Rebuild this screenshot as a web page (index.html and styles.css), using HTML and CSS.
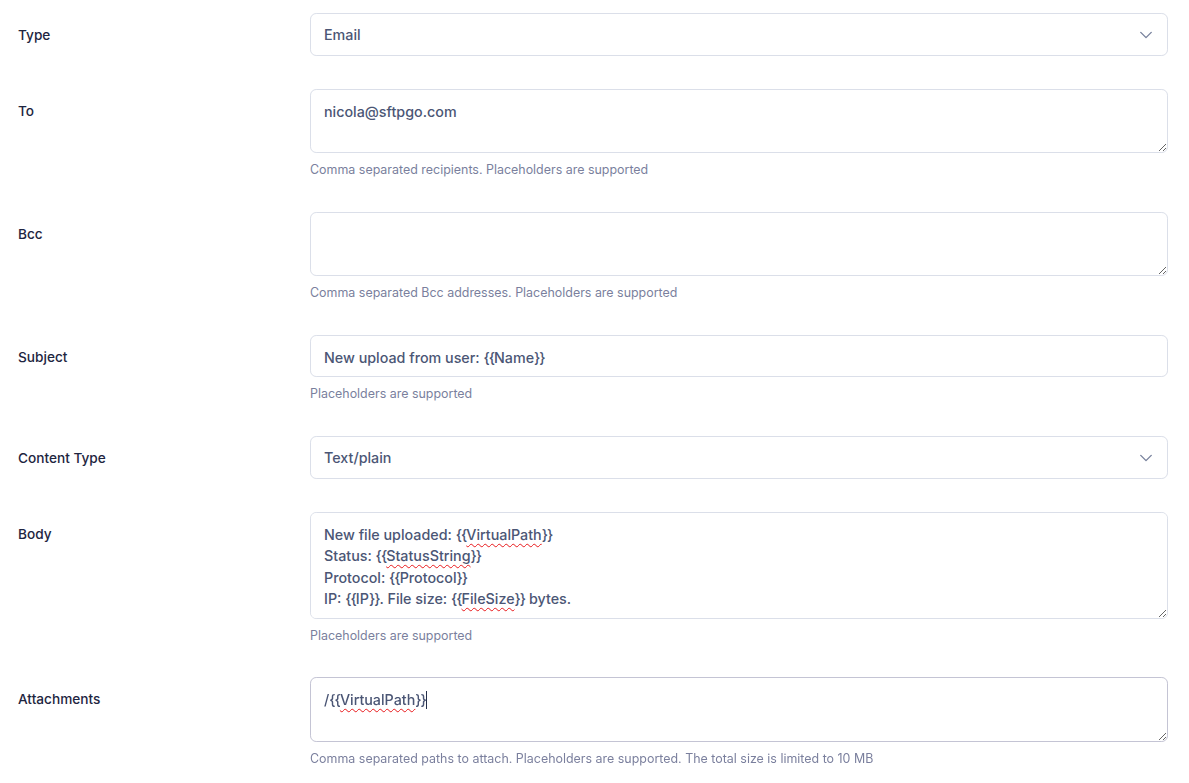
FILE: index.html
```html
<!DOCTYPE html>
<html lang="en">
<head>
<meta charset="utf-8">
<title>Email action</title>
<link rel="stylesheet" href="styles.css">
</head>
<body>
<form class="form">
  <div class="row">
    <label class="label">Type</label>
    <div class="field">
      <div class="control select">
        <span>Email</span>
        <svg class="chev" width="14" height="14" viewBox="0 0 16 16"><path d="M2 5l6 6 6-6" fill="none" stroke="#78829D" stroke-width="1.6" stroke-linecap="round" stroke-linejoin="round"/></svg>
      </div>
    </div>
  </div>
  <div class="row">
    <label class="label">To</label>
    <div class="field">
      <div class="control area rows2">nicola@sftpgo.com</div>
      <div class="hint">Comma separated recipients. Placeholders are supported</div>
    </div>
  </div>
  <div class="row">
    <label class="label">Bcc</label>
    <div class="field">
      <div class="control area rows2"></div>
      <div class="hint">Comma separated Bcc addresses. Placeholders are supported</div>
    </div>
  </div>
  <div class="row">
    <label class="label">Subject</label>
    <div class="field">
      <div class="control input">New upload from user: <span class="br">{{</span>Name<span class="br">}}</span></div>
      <div class="hint">Placeholders are supported</div>
    </div>
  </div>
  <div class="row">
    <label class="label">Content Type</label>
    <div class="field">
      <div class="control select">
        <span>Text/plain</span>
        <svg class="chev" width="14" height="14" viewBox="0 0 16 16"><path d="M2 5l6 6 6-6" fill="none" stroke="#78829D" stroke-width="1.6" stroke-linecap="round" stroke-linejoin="round"/></svg>
      </div>
    </div>
  </div>
  <div class="row">
    <label class="label">Body</label>
    <div class="field">
      <div class="control area rows4">New file uploaded: <span class="br">{{</span><span class="sp">VirtualPath</span><span class="br">}}</span><br>Status: <span class="br">{{</span><span class="sp">StatusString</span><span class="br">}}</span><br>Protocol: <span class="br">{{</span>Protocol<span class="br">}}</span><br>IP: <span class="br">{{</span>IP<span class="br">}}</span>. File size: <span class="br">{{</span><span class="sp">FileSize</span><span class="br">}}</span> bytes.</div>
      <div class="hint">Placeholders are supported</div>
    </div>
  </div>
  <div class="row">
    <label class="label">Attachments</label>
    <div class="field">
      <div class="control area rows2 focus">/<span class="br">{{</span><span class="sp">VirtualPath</span><span class="br">}}</span><span class="caret"></span></div>
      <div class="hint">Comma separated paths to attach. Placeholders are supported. The total size is limited to 10 MB</div>
    </div>
  </div>
</form>
</body>
</html>
```
FILE: styles.css
```css
html, body {
  margin: 0;
  padding: 0;
  background: #ffffff;
}
body {
  font-family: Inter, "Noto Sans", sans-serif;
  -webkit-font-smoothing: antialiased;
}
.form {
  padding: 13px 21px 0 18px;
  display: flex;
  flex-direction: column;
  gap: 32.6px;
}
.row {
  display: grid;
  grid-template-columns: 292px 1fr;
  align-items: start;
}
.label {
  font-size: 13.65px;
  font-weight: 500;
  color: #1E2540;
  line-height: 21px;
  padding-top: 12px;
}
.control {
  box-sizing: border-box;
  border: 1px solid #DBDFE9;
  border-radius: 6.2px;
  padding: 11px 13px 10px;
  font-size: 14.3px;
  line-height: 21.45px;
  color: #4B5675;
  font-weight: 500;
  height: 43.4px;
  background: #fff;
}
.input { height: 42.4px; }
.select {
  display: flex;
  align-items: center;
  justify-content: space-between;
  padding-top: 10px;
  padding-right: 14px;
}
.chev {
  display: block;
}
.area {
  resize: vertical;
  overflow: auto;
}
.rows2 { height: 64.4px; }
.rows4 { height: 106.6px; }
.focus { border-color: #C4C4D4; }
.br {
  letter-spacing: -1px;
}
.sp {
  text-decoration: underline wavy #e8191c;
  text-decoration-thickness: 1.3px;
  text-underline-offset: 3px;
}
.caret {
  display: inline-block;
  width: 1px;
  height: 18px;
  background: #252F4A;
  vertical-align: -4px;
}
.hint {
  margin-top: 7px;
  font-size: 12.45px;
  line-height: 19px;
  color: #7A7F9D;
}
```
